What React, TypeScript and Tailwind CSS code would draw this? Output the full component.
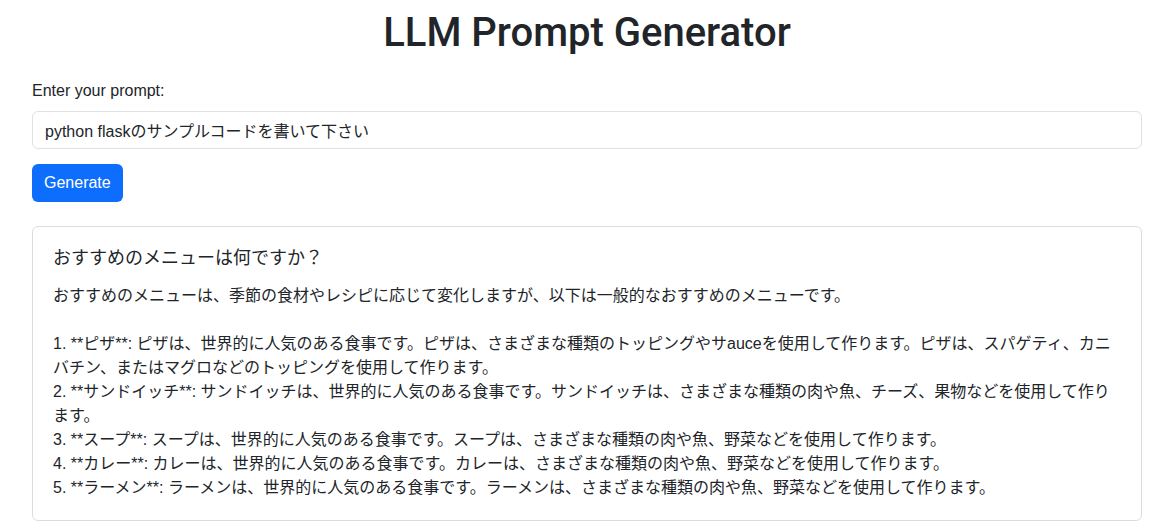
const answerLines = [
  "おすすめのメニューは、季節の食材やレシピに応じて変化しますが、以下は一般的なおすすめのメニューです。",
  "",
  "1. **ピザ**: ピザは、世界的に人気のある食事です。ピザは、さまざまな種類のトッピングやサauceを使用して作ります。ピザは、スパゲティ、カニ",
  "バチン、またはマグロなどのトッピングを使用して作ります。",
  "2. **サンドイッチ**: サンドイッチは、世界的に人気のある食事です。サンドイッチは、さまざまな種類の肉や魚、チーズ、果物などを使用して作り",
  "ます。",
  "3. **スープ**: スープは、世界的に人気のある食事です。スープは、さまざまな種類の肉や魚、野菜などを使用して作ります。",
  "4. **カレー**: カレーは、世界的に人気のある食事です。カレーは、さまざまな種類の肉や魚、野菜などを使用して作ります。",
  "5. **ラーメン**: ラーメンは、世界的に人気のある食事です。ラーメンは、さまざまな種類の肉や魚、野菜などを使用して作ります。",
];

const fontStack =
  "font-['Liberation_Sans','Noto_Sans_CJK_JP',sans-serif]";

function ResultCard() {
  return (
    <div className="mt-6 rounded-md border border-[#dcdcdd] bg-white p-5">
      <h5 className="mb-[15px] text-[18px] leading-[22px] text-[#212529]">
        おすすめのメニューは何ですか？
      </h5>
      <div className="text-base leading-6 text-[#212529]">
        {answerLines.map((line, i) =>
          line === "" ? (
            <div key={i} className="h-6" />
          ) : (
            <div key={i} className="whitespace-nowrap">
              {line}
            </div>
          ),
        )}
      </div>
    </div>
  );
}

export default function App() {
  return (
    <div className={`min-h-screen bg-white pl-8 pr-3 ${fontStack}`}>
      <h1 className="mb-[22px] pt-[9px] text-center font-['Roboto','Liberation_Sans',sans-serif] text-[40px] font-medium leading-[48px] text-[#212529]">
        LLM Prompt Generator
      </h1>

      <form onSubmit={(e) => e.preventDefault()}>
        <label
          htmlFor="prompt"
          className="mb-2 block text-base leading-6 text-[#212529]"
        >
          Enter your prompt:
        </label>
        <input
          id="prompt"
          type="text"
          defaultValue="python flaskのサンプルコードを書いて下さい"
          className="block h-[38px] w-full rounded-md border border-[#dee2e6] bg-white px-3 text-base text-[#212529] outline-none"
        />
        <button
          type="submit"
          className="mt-[15px] h-[38px] rounded-md bg-[#0d6efd] px-3 text-base text-white"
        >
          Generate
        </button>
      </form>

      <ResultCard />
    </div>
  );
}
